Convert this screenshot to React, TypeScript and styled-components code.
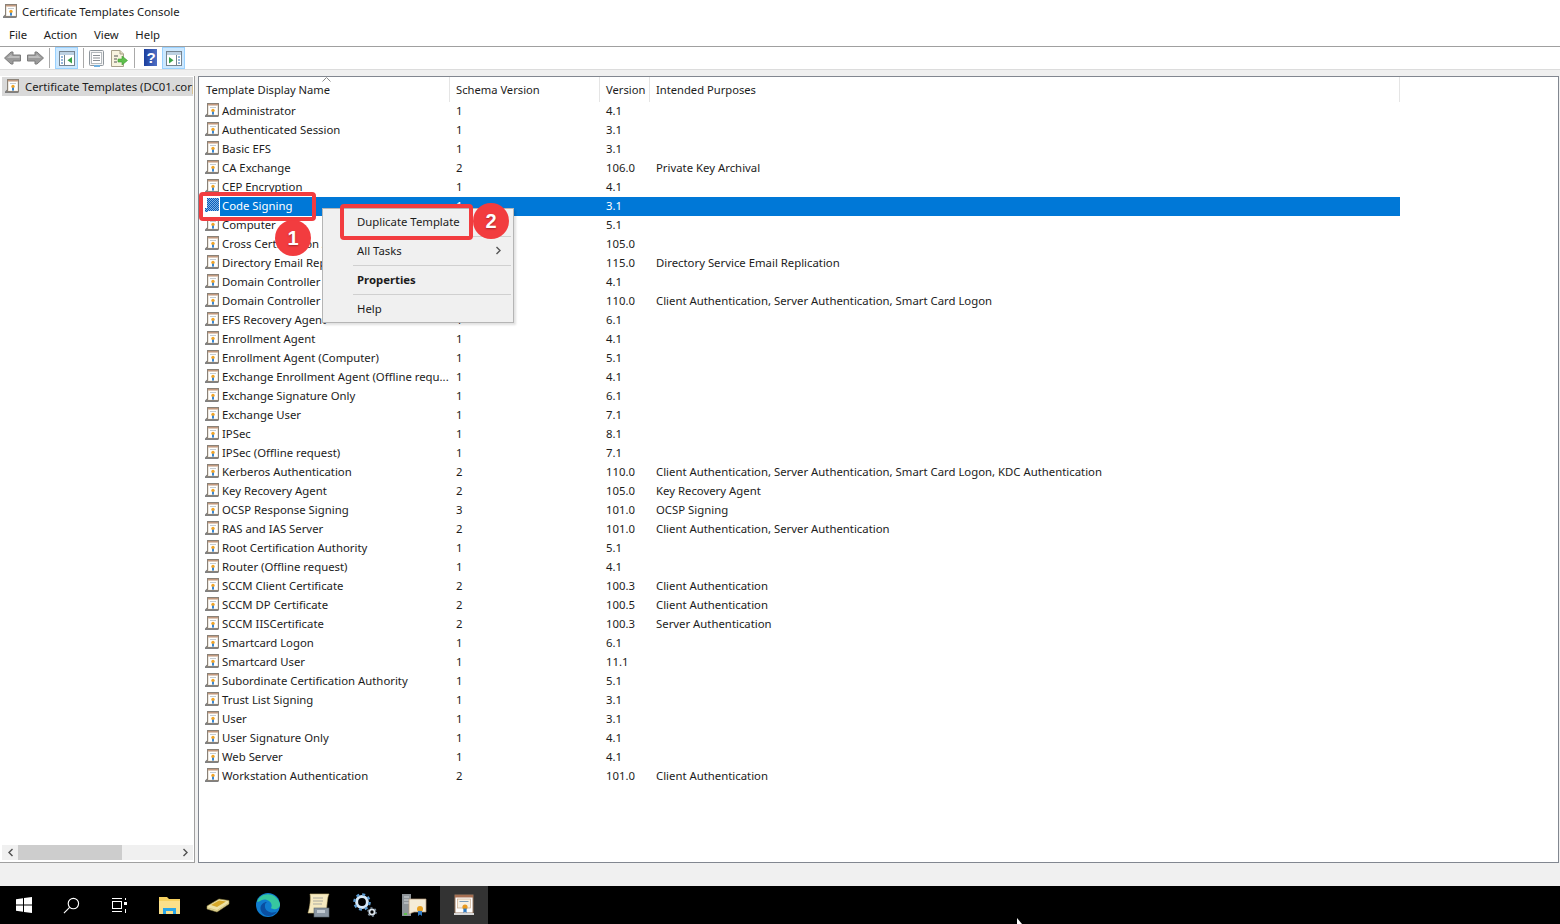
import React from 'react';
import styled, { createGlobalStyle } from 'styled-components';

const templates: [string, string, string, string][] = [
  ['Administrator', '1', '4.1', ''],
  ['Authenticated Session', '1', '3.1', ''],
  ['Basic EFS', '1', '3.1', ''],
  ['CA Exchange', '2', '106.0', 'Private Key Archival'],
  ['CEP Encryption', '1', '4.1', ''],
  ['Code Signing', '1', '3.1', ''],
  ['Computer', '1', '5.1', ''],
  ['Cross Certification Authority', '2', '105.0', ''],
  ['Directory Email Replication', '2', '115.0', 'Directory Service Email Replication'],
  ['Domain Controller', '1', '4.1', ''],
  ['Domain Controller Authentication', '2', '110.0', 'Client Authentication, Server Authentication, Smart Card Logon'],
  ['EFS Recovery Agent', '1', '6.1', ''],
  ['Enrollment Agent', '1', '4.1', ''],
  ['Enrollment Agent (Computer)', '1', '5.1', ''],
  ['Exchange Enrollment Agent (Offline requ...', '1', '4.1', ''],
  ['Exchange Signature Only', '1', '6.1', ''],
  ['Exchange User', '1', '7.1', ''],
  ['IPSec', '1', '8.1', ''],
  ['IPSec (Offline request)', '1', '7.1', ''],
  ['Kerberos Authentication', '2', '110.0', 'Client Authentication, Server Authentication, Smart Card Logon, KDC Authentication'],
  ['Key Recovery Agent', '2', '105.0', 'Key Recovery Agent'],
  ['OCSP Response Signing', '3', '101.0', 'OCSP Signing'],
  ['RAS and IAS Server', '2', '101.0', 'Client Authentication, Server Authentication'],
  ['Root Certification Authority', '1', '5.1', ''],
  ['Router (Offline request)', '1', '4.1', ''],
  ['SCCM Client Certificate', '2', '100.3', 'Client Authentication'],
  ['SCCM DP Certificate', '2', '100.5', 'Client Authentication'],
  ['SCCM IISCertificate', '2', '100.3', 'Server Authentication'],
  ['Smartcard Logon', '1', '6.1', ''],
  ['Smartcard User', '1', '11.1', ''],
  ['Subordinate Certification Authority', '1', '5.1', ''],
  ['Trust List Signing', '1', '3.1', ''],
  ['User', '1', '3.1', ''],
  ['User Signature Only', '1', '4.1', ''],
  ['Web Server', '1', '4.1', ''],
  ['Workstation Authentication', '2', '101.0', 'Client Authentication'],
];

const GlobalStyle = createGlobalStyle`
  html, body { margin: 0; padding: 0; background: #fff; }
  * { box-sizing: border-box; }
`;

const Page = styled.div`
  width: 1560px;
  height: 924px;
  position: relative;
  overflow: hidden;
  display: flex;
  flex-direction: column;
  font-family: "Noto Sans", "Liberation Sans", sans-serif;
  font-size: 11.35px;
  color: #1c1c1c;
`;

const TitleBar = styled.div`
  height: 24px;
  display: flex;
  align-items: center;
  gap: 4px;
  padding: 0 0 1px 3px;
`;

const MenuBar = styled.div`
  height: 23px;
  display: flex;
  align-items: center;
  gap: 16.6px;
  padding: 0 0 2px 9px;
  border-bottom: 1px solid #a0a0a0;
`;

const Toolbar = styled.div`
  height: 23px;
  display: flex;
  align-items: center;
  padding-left: 1px;
  border-bottom: 1px solid #dcdcdc;
`;

const ToolButton = styled.div<{ $active?: boolean }>`
  width: 23px;
  height: 22px;
  display: flex;
  align-items: center;
  justify-content: center;
  background: ${(p) => (p.$active ? '#cce8ff' : 'transparent')};
  border: 1px solid ${(p) => (p.$active ? '#99d1ff' : 'transparent')};
`;

const ToolSep = styled.div<{ $l: number; $r: number }>`
  width: 1px;
  height: 20px;
  background: #a9a9a9;
  margin: 0 ${(p) => p.$r}px 0 ${(p) => p.$l}px;
`;

const Workspace = styled.div`
  flex: 1;
  min-height: 0;
  background: #f0f0f0;
  display: flex;
  gap: 3px;
  padding: 6px 1px 1px 0;
`;

const TreePane = styled.div`
  width: 195px;
  background: #fff;
  border-right: 1px solid #a0a0a0;
  border-bottom: 1px solid #a0a0a0;
  display: flex;
  flex-direction: column;
  padding: 1px 1px 2px 2px;
`;

const TreeItem = styled.div`
  height: 19px;
  background: #d9d9d9;
  display: flex;
  align-items: center;
  gap: 5px;
  padding-left: 3px;
  white-space: nowrap;
  overflow: hidden;
`;

const TreeFill = styled.div`
  flex: 1;
`;

const HScroll = styled.div`
  height: 15px;
  background: #f0f0f0;
  display: flex;
  align-items: center;
  justify-content: space-between;
`;

const ScrollTrack = styled.div`
  flex: 1;
  height: 15px;
`;

const ScrollThumb = styled.div`
  width: 104px;
  height: 15px;
  background: #cdcdcd;
`;

const ScrollBtn = styled.div`
  width: 16px;
  height: 15px;
  display: flex;
  align-items: center;
  justify-content: center;
`;

const ListPane = styled.div`
  flex: 1;
  background: #fff;
  border: 1px solid #828790;
  padding: 0 0 0 1px;
  overflow: hidden;
`;

const Columns = styled.div`
  display: grid;
  grid-template-columns: 250px 150px 50px 750px;
  width: 1200px;
`;

const HeaderCell = styled.div`
  position: relative;
  height: 25px;
  padding: 0 0 1px 6px;
  display: flex;
  align-items: center;
  font-size: 11.2px;
  border-right: 1px solid #e5e5e5;
`;

const SortMark = styled.svg`
  position: absolute;
  top: 0;
  left: 122px;
`;

const Row = styled(Columns)`
  height: 19px;
  align-items: center;
`;

const NameCell = styled.div<{ $selected?: boolean }>`
  display: flex;
  align-items: center;
  height: 19px;
  padding: 0 0 2px 5px;
  gap: 2px;
  white-space: nowrap;
  background: ${(p) => (p.$selected ? 'linear-gradient(90deg, #fff 20px, #0078d7 20px)' : 'transparent')};
  color: ${(p) => (p.$selected ? '#fff' : 'inherit')};
`;

const Cell = styled.div<{ $selected?: boolean; $pad?: number }>`
  height: 19px;
  line-height: 17px;
  padding-left: ${(p) => p.$pad ?? 6}px;
  white-space: nowrap;
  background: ${(p) => (p.$selected ? '#0078d7' : 'transparent')};
  color: ${(p) => (p.$selected ? '#fff' : 'inherit')};
`;

const StatusBar = styled.div`
  height: 22px;
  background: #f0f0f0;
`;

const TaskBar = styled.div`
  height: 38px;
  background: #000;
  display: flex;
  align-items: center;
`;

const TaskSlot = styled.div<{ $active?: boolean; $ml?: number; $w?: number }>`
  width: ${(p) => p.$w ?? 48}px;
  height: 38px;
  margin-left: ${(p) => p.$ml ?? 0}px;
  display: flex;
  align-items: center;
  justify-content: center;
  background: ${(p) => (p.$active ? '#333' : 'transparent')};
`;

const ContextMenu = styled.div`
  position: absolute;
  left: 322px;
  top: 208px;
  width: 192px;
  height: 115px;
  background: #f0f0f0;
  border: 1px solid #b5b5b5;
  padding: 0 2px 0 30px;
  box-shadow: 2px 2px 2px rgba(0, 0, 0, 0.12);
  color: #1c1c1c;
`;

const MenuItem = styled.div<{ $bold?: boolean; $last?: boolean }>`
  height: 29px;
  padding: 0 9px 2px 4px;
  display: flex;
  align-items: center;
  justify-content: space-between;
  font-weight: ${(p) => (p.$bold ? 700 : 400)};
  border-bottom: ${(p) => (p.$last ? 'none' : '1px solid #d0d0d0')};
  &:first-child {
    height: 28px;
  }
`;

const Callout = styled.div<{ $l: number; $t: number; $w: number; $h: number }>`
  position: absolute;
  left: ${(p) => p.$l}px;
  top: ${(p) => p.$t}px;
  width: ${(p) => p.$w}px;
  height: ${(p) => p.$h}px;
  border: 4px solid #f23c3f;
  border-radius: 4px;
`;

const Badge = styled.div<{ $l: number; $t: number }>`
  position: absolute;
  left: ${(p) => p.$l}px;
  top: ${(p) => p.$t}px;
  width: 36px;
  height: 36px;
  border-radius: 50%;
  background: #f23c3f;
  color: #fff;
  display: flex;
  align-items: center;
  justify-content: center;
  font-family: "Liberation Sans", Arial, sans-serif;
  font-weight: 700;
  font-size: 20px;
  text-shadow: 0 1px 2px rgba(0, 0, 0, 0.35);
`;

const Pointer = styled.svg`
  position: absolute;
  left: 1016px;
  top: 918px;
`;

const IconBox = styled.svg`
  flex-shrink: 0;
`;

function CertIcon({ selected }: { selected?: boolean }) {
  if (selected) {
    return (
      <IconBox width={15} height={15} viewBox="0 0 15 15">
        <defs>
          <pattern id="dither" width="2" height="2" patternUnits="userSpaceOnUse">
            <rect width="2" height="2" fill="#7fb4e6" />
            <rect width="1" height="1" fill="#0a5cb8" />
            <rect x="1" y="1" width="1" height="1" fill="#0a5cb8" />
          </pattern>
        </defs>
        <rect x="2" y="0" width="12" height="13" fill="url(#dither)" />
        <rect x="0" y="10" width="3" height="4" fill="url(#dither)" />
      </IconBox>
    );
  }
  return (
    <IconBox width={15} height={15} viewBox="0 0 15 15">
      <path d="M0 12.5 L3 9.5 V13 H13.5 V14 H0 Z" fill="#808080" />
      <rect x="2.5" y="0.5" width="11" height="12" fill="#efe9df" stroke="#8a8278" />
      <rect x="3" y="1" width="10" height="1.4" fill="#c39a80" />
      <rect x="4" y="3" width="8" height="8.5" fill="#fff" />
      <rect x="5" y="4" width="6" height="1" fill="#c3ccd4" />
      <circle cx="8" cy="7.5" r="1.7" fill="#f0a428" />
      <path d="M7 8.8 V12 L8 11.2 L9 12 V8.8 Z" fill="#3a86d0" />
    </IconBox>
  );
}

const ArrowIcon = ({ flip }: { flip?: boolean }) => (
  <svg width="17" height="14" viewBox="0 0 17 14" style={flip ? { transform: 'scaleX(-1)' } : undefined}>
    <path d="M0.5 7 L7 1 H9 V4 H16.5 V10 H9 V13 H7 Z" fill="#9b9b9b" stroke="#7c7c7c" />
    <path d="M3 7 L7.5 3 V5 H15.5 V7 Z" fill="#bdbdbd" />
  </svg>
);

const PaneIcon = ({ right }: { right?: boolean }) => (
  <svg width="16" height="15" viewBox="0 0 16 15">
    <rect x="0.5" y="0.5" width="15" height="14" fill="#fff" stroke="#75838f" />
    <rect x="1" y="1" width="14" height="3" fill="#bcd0e2" />
    <path d={right ? 'M10.5 4 V14' : 'M5.5 4 V14'} stroke="#75838f" />
    {right ? (
      <>
        <path d="M3 6 L7.5 9.2 L3 12.5 Z" fill="#37a347" />
        <path d="M12 6 H14 M12 9 H14 M12 12 H14" stroke="#2c6fb8" strokeWidth="1.2" />
      </>
    ) : (
      <>
        <path d="M13 6 L8.5 9.2 L13 12.5 Z" fill="#37a347" />
        <path d="M2 6 H4 M2 9 H4 M2 12 H4" stroke="#2c6fb8" strokeWidth="1.2" />
      </>
    )}
  </svg>
);

const PropertiesIcon = () => (
  <svg width="15" height="17" viewBox="0 0 15 17">
    <rect x="0.5" y="0.5" width="14" height="15" rx="1" fill="#f4f4f4" stroke="#8f969c" />
    <rect x="2.5" y="2.5" width="10" height="11" fill="#fff" stroke="#b4b9bd" />
    <path d="M4 5.5 H11 M4 8 H11 M4 10.5 H11" stroke="#8a8f94" />
    <rect x="5" y="15" width="6" height="2" fill="#6fb0e0" />
  </svg>
);

const ExportIcon = () => (
  <svg width="17" height="17" viewBox="0 0 17 17">
    <path d="M0.5 0.5 H9 L12.5 4 V16.5 H0.5 Z" fill="#f8f4df" stroke="#a7a08a" />
    <path d="M9 0.5 V4 H12.5" fill="#e4dcc0" stroke="#a7a08a" />
    <path d="M3 6 H7 M3 9 H6 M3 12 H6" stroke="#555" />
    <path d="M7 9 H11 V6 L16.5 10.5 L11 15 V12 H7 Z" fill="#5fc04c" stroke="#3c9a33" strokeWidth="0.6" />
  </svg>
);

const HelpIcon = () => (
  <svg width="14" height="18" viewBox="0 0 14 18">
    <defs>
      <linearGradient id="helpFill" x1="0" y1="0" x2="1" y2="0">
        <stop offset="0" stopColor="#1b3f9e" />
        <stop offset="1" stopColor="#4f6fc4" />
      </linearGradient>
    </defs>
    <rect width="13" height="17" fill="url(#helpFill)" />
    <text x="7" y="14" fontSize="15" fontWeight="700" fontFamily="Liberation Sans" fill="#fff" textAnchor="middle">?</text>
  </svg>
);

const WinLogo = () => (
  <svg width="16" height="16" viewBox="0 0 16 16" fill="#fff">
    <path d="M0 2.3 L7 1.3 V7.5 H0 Z M8 1.1 L16 0 V7.5 H8 Z M0 8.5 H7 V14.7 L0 13.7 Z M8 8.5 H16 V16 L8 14.9 Z" />
  </svg>
);

const SearchGlyph = () => (
  <svg width="17" height="17" viewBox="0 0 18 18" fill="none" stroke="#fff" strokeWidth="1.2">
    <circle cx="11" cy="7" r="5.5" />
    <path d="M7 11 L1 17" />
  </svg>
);

const TaskViewGlyph = () => (
  <svg width="16" height="16" viewBox="0 0 16 16" fill="none" stroke="#fff" strokeWidth="1">
    <rect x="1.5" y="4.5" width="9" height="7" />
    <path d="M1 1.5 H11 M1 14.5 H11 M14.5 1 V3 M14.5 12 V16" />
    <rect x="13" y="5" width="3" height="3" fill="#fff" stroke="none" />
  </svg>
);

const FolderGlyph = () => (
  <svg width="22" height="19" viewBox="0 0 22 19">
    <path d="M0 1 H8 L10 3 H21 V18 H0 Z" fill="#f6d160" />
    <rect x="0" y="5" width="21" height="13" fill="#fbe08a" />
    <path d="M4 18 V12 H17 V18 H14 V15 H7 V18 Z" fill="#2aa6e8" />
  </svg>
);

const BookGlyph = () => (
  <svg width="24" height="15" viewBox="0 0 24 15">
    <path d="M1 8 L13 1 L23 2.5 L23 6 L11 14 L1 11 Z" fill="#eee3a8" stroke="#8d7f3c" strokeWidth="0.6" />
    <path d="M5 7 L13 2.5 L20 3.6 L11 9 Z" fill="#d6a92c" />
    <path d="M2 10 L11 12.5 L22 5.5" stroke="#c7b870" fill="none" strokeWidth="0.7" />
  </svg>
);

const EdgeGlyph = () => (
  <svg width="24" height="24" viewBox="0 0 24 24">
    <circle cx="12" cy="12" r="12" fill="#0f7ccf" />
    <path d="M1 9 C4 -1 20 -2 24 11 C24.5 16 17 17.5 15 15 C18 9 10 5 6 7 C4 8 2 9 1 9 Z" fill="#37c79f" />
    <path d="M9 12 C8 18 15 21 21 18.5 C17 24 8 25 5 18 C3 13 7 9 11 9 C9.5 10 9 11 9 12 Z" fill="#0a4ea0" />
  </svg>
);

const ScrollGlyph = () => (
  <svg width="23" height="25" viewBox="0 0 23 25">
    <path d="M3 1 H22 C20 4 20 14 19 20 H1 C3 14 4 5 3 1 Z" fill="#f5e9c0" stroke="#c4b272" strokeWidth="0.6" />
    <path d="M6 5 H16 M6 8 H16 M6 11 H15" stroke="#a9a9a0" />
    <rect x="7" y="15" width="15" height="9" fill="#8b97a3" stroke="#59636c" strokeWidth="0.6" />
    <rect x="10" y="17" width="8" height="3" fill="#c4ccd3" />
  </svg>
);

const GearsGlyph = () => (
  <svg width="24" height="24" viewBox="0 0 24 24" fill="none">
    <circle cx="9" cy="9" r="5.4" stroke="#d7e8f7" strokeWidth="3" />
    <circle cx="9" cy="9" r="7.6" stroke="#5c9bd1" strokeWidth="2.4" strokeDasharray="3 2.96" />
    <circle cx="19" cy="19" r="2.6" stroke="#dfe7ee" strokeWidth="1.8" />
    <circle cx="19" cy="19" r="4" stroke="#8293a3" strokeWidth="1.6" strokeDasharray="2 2.2" />
  </svg>
);

const ServerCertGlyph = () => (
  <svg width="25" height="23" viewBox="0 0 25 23">
    <rect x="0" y="0" width="9" height="22" fill="#8e9499" />
    <path d="M2 3 H7 M2 6 H7 M2 9 H7" stroke="#d4d8da" />
    <rect x="2" y="19" width="3" height="2" fill="#5fc04c" />
    <path d="M7 5 H24 V18 H12 L7 20 Z" fill="#f4ecd8" stroke="#b69a7a" strokeWidth="0.7" />
    <circle cx="18" cy="15" r="3" fill="#e8a020" />
    <path d="M16 17 V22 L18 20.5 L20 22 V17 Z" fill="#2f7ac4" />
  </svg>
);

const ActiveCertGlyph = () => (
  <svg width="20" height="22" viewBox="0 0 20 22">
    <rect x="1" y="1" width="18" height="18" fill="#fff" stroke="#9b7a60" />
    <rect x="1" y="1" width="18" height="2.5" fill="#a76f52" />
    <rect x="3.5" y="5" width="13" height="9" fill="#f7f0e2" stroke="#c9a98a" strokeWidth="0.7" />
    <rect x="5.5" y="7" width="9" height="1" fill="#7d9dbb" />
    <circle cx="11" cy="13" r="2.6" fill="#e89a20" />
    <path d="M9.4 14.5 V19 L11 17.8 L12.6 19 V14.5 Z" fill="#2f7ac4" />
    <rect x="0" y="19" width="20" height="2" fill="#d8d8d8" />
  </svg>
);

const Chevron = ({ right, color = '#505050' }: { right?: boolean; color?: string }) => (
  <svg width="7" height="9" viewBox="0 0 7 9" fill="none" stroke={color} strokeWidth="1.4">
    <path d={right ? 'M1.5 1 L5 4.5 L1.5 8' : 'M5.5 1 L2 4.5 L5.5 8'} />
  </svg>
);

export default function App() {
  return (
    <Page>
      <GlobalStyle />
      <TitleBar>
        <CertIcon />
        <span>Certificate Templates Console</span>
      </TitleBar>
      <MenuBar>
        <span>File</span>
        <span>Action</span>
        <span>View</span>
        <span>Help</span>
      </MenuBar>
      <Toolbar>
        <ToolButton><ArrowIcon /></ToolButton>
        <ToolButton><ArrowIcon flip /></ToolButton>
        <ToolSep $l={2} $r={5} />
        <ToolButton $active><PaneIcon /></ToolButton>
        <ToolSep $l={5} $r={1} />
        <ToolButton><PropertiesIcon /></ToolButton>
        <ToolButton><ExportIcon /></ToolButton>
        <ToolSep $l={3} $r={4} />
        <ToolButton><HelpIcon /></ToolButton>
        <ToolButton $active><PaneIcon right /></ToolButton>
      </Toolbar>
      <Workspace>
        <TreePane>
          <TreeItem>
            <CertIcon />
            <span>Certificate Templates (DC01.corp.local)</span>
          </TreeItem>
          <TreeFill />
          <HScroll>
            <ScrollBtn><Chevron /></ScrollBtn>
            <ScrollTrack><ScrollThumb /></ScrollTrack>
            <ScrollBtn><Chevron right /></ScrollBtn>
          </HScroll>
        </TreePane>
        <ListPane>
          <Columns>
            <HeaderCell>
              Template Display Name
              <SortMark width="9" height="5" viewBox="0 0 9 5" fill="none" stroke="#8a8a8a">
                <path d="M0.5 4.5 L4.5 0.5 L8.5 4.5" />
              </SortMark>
            </HeaderCell>
            <HeaderCell>Schema Version</HeaderCell>
            <HeaderCell>Version</HeaderCell>
            <HeaderCell>Intended Purposes</HeaderCell>
          </Columns>
          {templates.map(([name, schema, version, purposes]) => {
            const selected = name === 'Code Signing';
            return (
              <Row key={name}>
                <NameCell $selected={selected}>
                  <CertIcon selected={selected} />
                  <span>{name}</span>
                </NameCell>
                <Cell $selected={selected}>{schema}</Cell>
                <Cell $selected={selected}>{version}</Cell>
                <Cell $selected={selected}>{purposes}</Cell>
              </Row>
            );
          })}
        </ListPane>
      </Workspace>
      <StatusBar />
      <TaskBar>
        <TaskSlot $w={47}><WinLogo /></TaskSlot>
        <TaskSlot><SearchGlyph /></TaskSlot>
        <TaskSlot $w={47}><TaskViewGlyph /></TaskSlot>
        <TaskSlot $ml={4}><FolderGlyph /></TaskSlot>
        <TaskSlot><BookGlyph /></TaskSlot>
        <TaskSlot $ml={2}><EdgeGlyph /></TaskSlot>
        <TaskSlot $ml={2}><ScrollGlyph /></TaskSlot>
        <TaskSlot $ml={-1}><GearsGlyph /></TaskSlot>
        <TaskSlot $ml={1}><ServerCertGlyph /></TaskSlot>
        <TaskSlot $ml={2} $active><ActiveCertGlyph /></TaskSlot>
      </TaskBar>

      <ContextMenu>
        <MenuItem>Duplicate Template</MenuItem>
        <MenuItem>All Tasks <Chevron right color="#555" /></MenuItem>
        <MenuItem $bold>Properties</MenuItem>
        <MenuItem $last>Help</MenuItem>
      </ContextMenu>
      <Callout $l={199} $t={192} $w={117} $h={29} />
      <Callout $l={340} $t={204} $w={133} $h={36} />
      <Badge $l={275} $t={220}>1</Badge>
      <Badge $l={473} $t={203}>2</Badge>
      <Pointer width="8" height="6" viewBox="0 0 8 6">
        <path d="M1 0 L1 6 L6 6 Z" fill="#fff" />
      </Pointer>
    </Page>
  );
}
